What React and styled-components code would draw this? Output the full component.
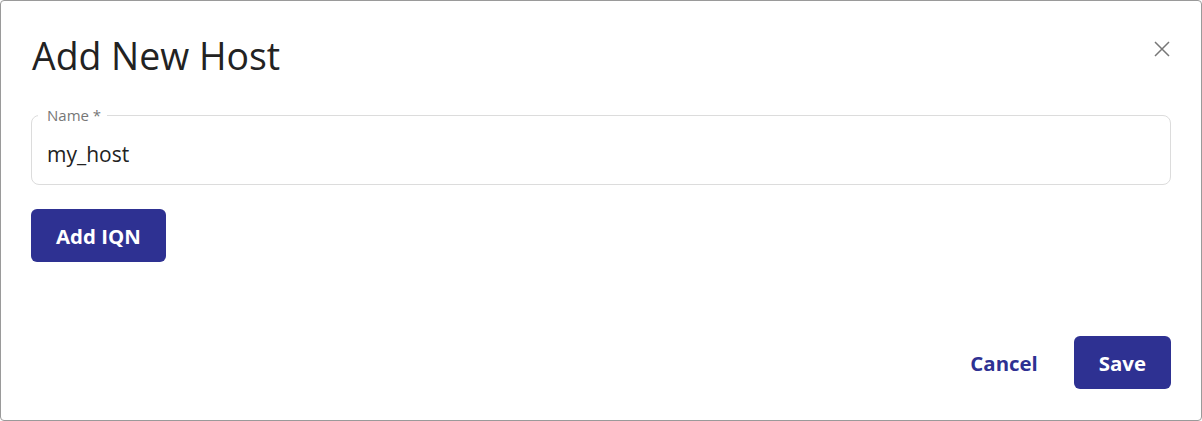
import React, { useState } from 'react';
import styled, { createGlobalStyle } from 'styled-components';

const GlobalStyle = createGlobalStyle`
  html, body {
    margin: 0;
    padding: 0;
    background: #ffffff;
  }
  * {
    box-sizing: border-box;
  }
`;

const brand = '#2e3192';
const font = `"Open Sans", Lato, sans-serif`;

const Dialog = styled.div`
  width: 1202px;
  height: 421px;
  border: 1px solid #9a9a9a;
  border-radius: 4px;
  background: #ffffff;
  padding: 0 30px 31px 30px;
  display: flex;
  flex-direction: column;
  font-family: ${font};
  color: #222222;
`;

const Header = styled.div`
  display: flex;
  justify-content: space-between;
  align-items: flex-start;
  padding-top: 33px;
  height: 114px;
`;

const Title = styled.h2`
  margin: 0;
  padding-left: 1px;
  font-size: 37.4px;
  font-weight: 400;
  line-height: 44px;
  color: #222222;
`;

const CloseButton = styled.button`
  width: 24px;
  height: 24px;
  margin-top: 3px;
  margin-right: -3px;
  padding: 0;
  border: none;
  background: transparent;
  display: flex;
  align-items: center;
  justify-content: center;
  cursor: pointer;
  color: #777777;
`;

const Field = styled.div`
  position: relative;
  height: 70px;
  border: 1px solid #dcdcdc;
  border-radius: 8px;
  display: flex;
  align-items: center;
`;

const FieldLabel = styled.label`
  position: absolute;
  top: -10px;
  left: 6px;
  padding: 0 6px 0 9px;
  background: #ffffff;
  font-size: 15px;
  line-height: 18px;
  color: #777777;
`;

const Input = styled.input`
  width: 100%;
  border: none;
  outline: none;
  background: transparent;
  padding: 8px 15px 0 15px;
  font-family: ${font};
  font-size: 21px;
  color: #222222;
`;

const Button = styled.button`
  height: 53px;
  padding: 0 ${p => p.$pad ?? 25}px;
  border: none;
  border-radius: 6px;
  background: ${p => (p.$text ? 'transparent' : brand)};
  color: ${p => (p.$text ? brand : '#ffffff')};
  font-family: ${font};
  font-size: 20.4px;
  font-weight: 700;
  cursor: pointer;
`;

const Row = styled.div`
  margin-top: 24px;
  display: flex;
`;

const Actions = styled.div`
  margin-top: auto;
  display: flex;
  justify-content: flex-end;
  align-items: center;
  gap: 20px;
`;

export default function App() {
  const [name, setName] = useState('my_host');

  return (
    <>
      <GlobalStyle />
      <Dialog>
        <Header>
          <Title>Add New Host</Title>
          <CloseButton aria-label="Close">
            <svg width="16" height="16" viewBox="0 0 16 16">
              <path d="M1 1 L15 15 M15 1 L1 15" stroke="currentColor" strokeWidth="1.5" />
            </svg>
          </CloseButton>
        </Header>

        <Field>
          <FieldLabel>Name *</FieldLabel>
          <Input value={name} onChange={e => setName(e.target.value)} />
        </Field>

        <Row>
          <Button>Add IQN</Button>
        </Row>

        <Actions>
          <Button $text $pad={16}>Cancel</Button>
          <Button>Save</Button>
        </Actions>
      </Dialog>
    </>
  );
}
